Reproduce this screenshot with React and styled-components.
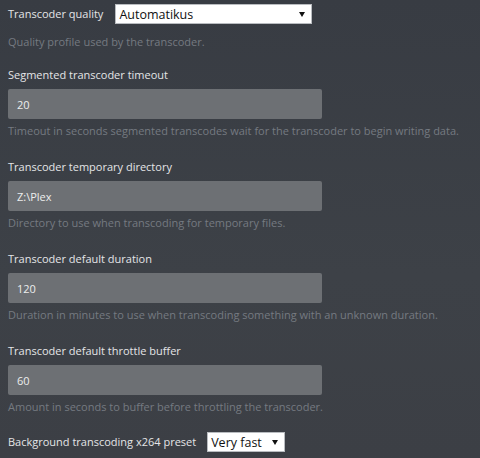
import React from "react";
import styled, { createGlobalStyle } from "styled-components";

const Global = createGlobalStyle`
  html, body { margin: 0; padding: 0; }
  body {
    background: linear-gradient(180deg, #383c43 0%, #3d4147 60%, #3c3f45 100%);
    min-height: 458px;
    font-family: "Open Sans", "Liberation Sans", sans-serif;
    overflow: hidden;
  }
`;

const Page = styled.div`
  padding: 0 8px;
  width: 464px;
`;

const InlineRow = styled.div`
  display: flex;
  align-items: center;
  height: 28px;
  gap: ${(p) => p.$gap || 12}px;
  margin-top: ${(p) => p.$top || 0}px;
`;

const Label = styled.div`
  font-size: 11px;
  line-height: 18px;
  color: #e4e5e7;
  white-space: nowrap;
`;

const Help = styled.div`
  font-size: 11px;
  line-height: 18px;
  color: #757a81;
  margin-top: ${(p) => p.$top ?? 3}px;
  white-space: nowrap;
`;

const Section = styled.div`
  margin-top: ${(p) => p.$top ?? 18}px;
`;

const TextInput = styled.div`
  margin-top: 5px;
  width: 314px;
  height: 30px;
  box-sizing: border-box;
  background: #6d7074;
  border-radius: 2px;
  padding: 0 9px;
  display: flex;
  align-items: center;
  font-size: 11px;
  color: #eceded;
`;

const SelectBox = styled.div`
  width: ${(p) => p.$w}px;
  height: 20px;
  box-sizing: border-box;
  background: #ffffff;
  border: 1px solid #b9bcc0;
  display: flex;
  align-items: center;
  justify-content: space-between;
  padding: 0 6px 0 3px;
  font-size: 12.5px;
  color: #111;
  white-space: nowrap;
  flex: none;
`;

const Arrow = styled.svg`
  width: 6px;
  height: 5px;
  flex: none;
`;

function Select({ value, width }) {
  return (
    <SelectBox $w={width}>
      <span>{value}</span>
      <Arrow viewBox="0 0 6 5">
        <path d="M0 0 H6 L3 5 Z" fill="#111" />
      </Arrow>
    </SelectBox>
  );
}

const fields = [
  {
    label: "Segmented transcoder timeout",
    value: "20",
    help: "Timeout in seconds segmented transcodes wait for the transcoder to begin writing data.",
  },
  {
    label: "Transcoder temporary directory",
    value: "Z:\\Plex",
    help: "Directory to use when transcoding for temporary files.",
  },
  {
    label: "Transcoder default duration",
    value: "120",
    help: "Duration in minutes to use when transcoding something with an unknown duration.",
  },
  {
    label: "Transcoder default throttle buffer",
    value: "60",
    help: "Amount in seconds to buffer before throttling the transcoder.",
  },
];

export default function App() {
  return (
    <>
      <Global />
      <Page>
        <InlineRow $gap={12}>
          <Label>Transcoder quality</Label>
          <Select value="Automatikus" width={197} />
        </InlineRow>
        <Help $top={5}>Quality profile used by the transcoder.</Help>
        {fields.map((f, i) => (
          <Section key={f.label} $top={i === 0 ? 15 : 18}>
            <Label>{f.label}</Label>
            <TextInput>{f.value}</TextInput>
            <Help>{f.help}</Help>
          </Section>
        ))}
        <InlineRow $gap={11} $top={12}>
          <Label>Background transcoding x264 preset</Label>
          <Select value="Very fast" width={78} />
        </InlineRow>
      </Page>
    </>
  );
}
